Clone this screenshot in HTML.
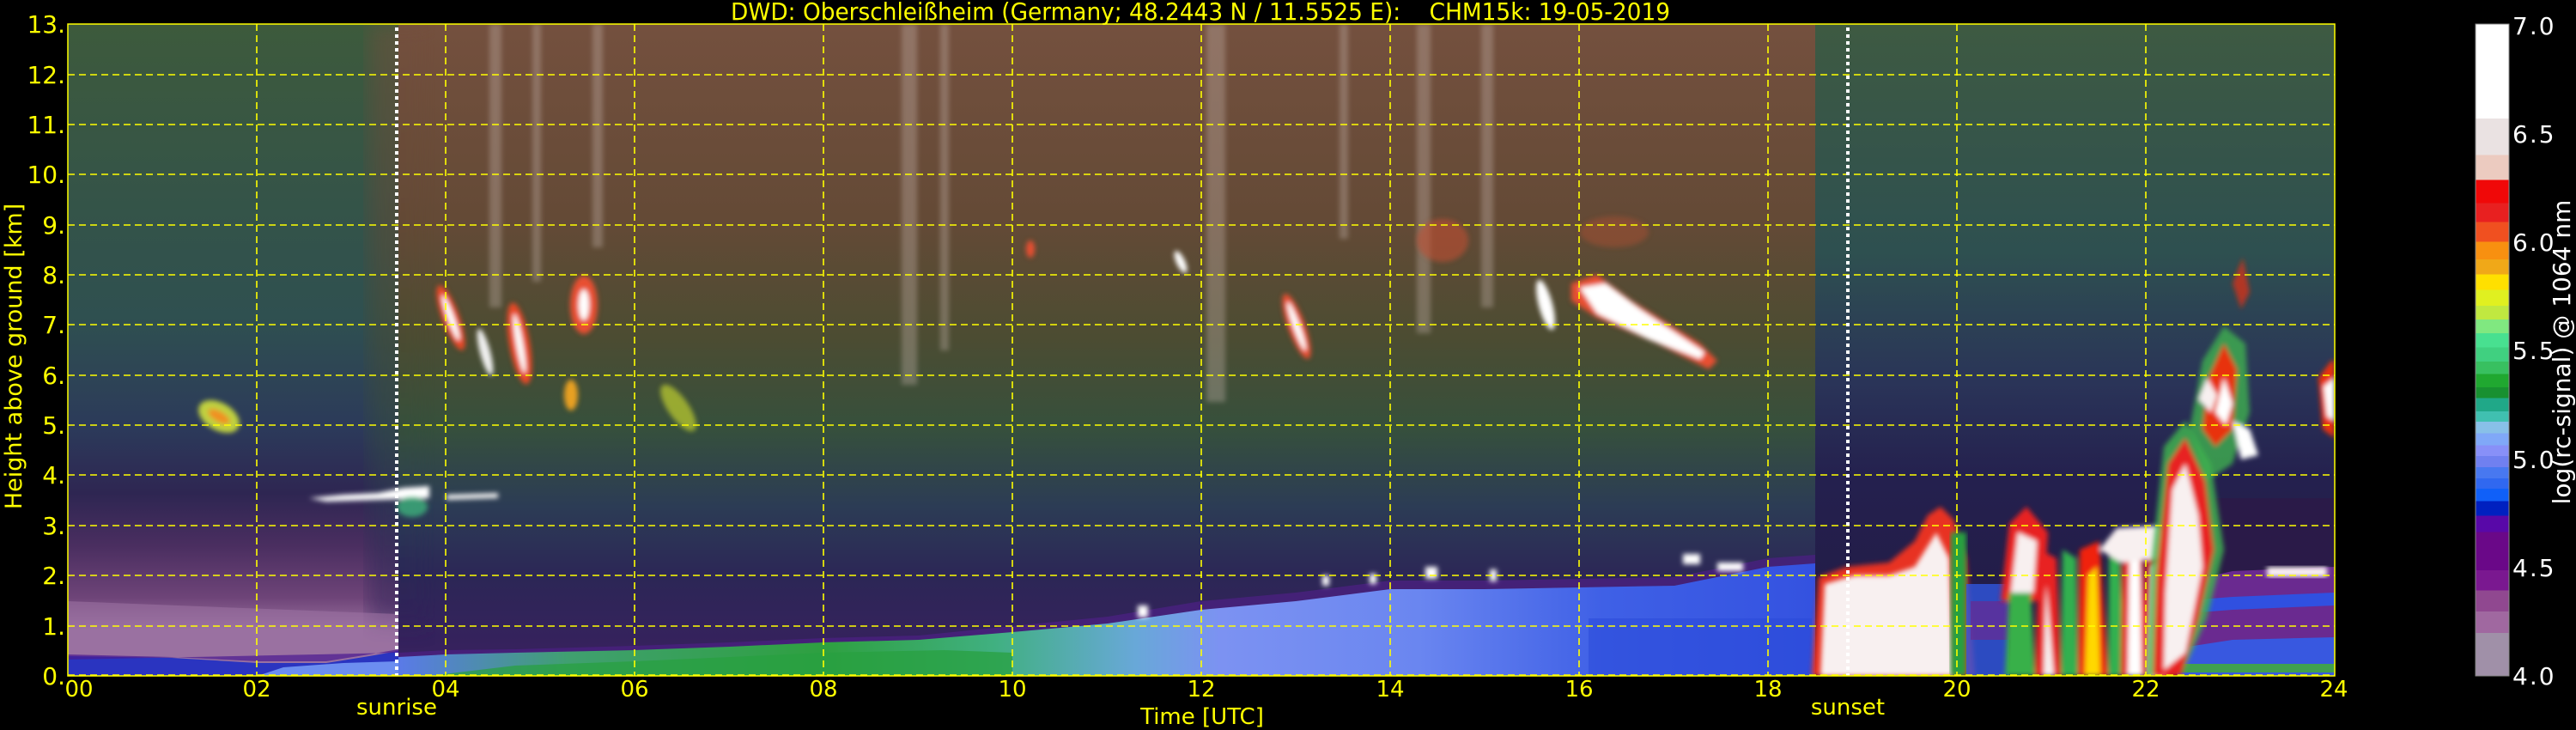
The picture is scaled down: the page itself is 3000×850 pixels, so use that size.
<!DOCTYPE html>
<html><head><meta charset="utf-8"><style>
html,body{margin:0;padding:0;background:#000;}
svg{display:block}
text{font-family:"DejaVu Sans","Liberation Sans",sans-serif;}
</style></head><body>
<svg width="3000" height="850" viewBox="0 0 3000 850" xmlns="http://www.w3.org/2000/svg">
<defs>
<linearGradient id="gL" x1="0" y1="28" x2="0" y2="787" gradientUnits="userSpaceOnUse">
<stop offset="0" stop-color="#3d5a3c"/><stop offset="0.45" stop-color="#2f5050"/>
<stop offset="0.62" stop-color="#2c3a5a"/><stop offset="0.72" stop-color="#2e2652"/>
<stop offset="0.80" stop-color="#4a2e60"/><stop offset="0.88" stop-color="#6e4478"/>
<stop offset="0.93" stop-color="#9a72a0"/><stop offset="1" stop-color="#9a72a0"/>
</linearGradient>
<linearGradient id="gM" x1="0" y1="28" x2="0" y2="787" gradientUnits="userSpaceOnUse">
<stop offset="0" stop-color="#74503e"/><stop offset="0.3" stop-color="#644a36"/>
<stop offset="0.48" stop-color="#4c4c32"/><stop offset="0.62" stop-color="#36503c"/>
<stop offset="0.74" stop-color="#2c3c55"/><stop offset="0.85" stop-color="#2c2656"/>
<stop offset="1" stop-color="#3a2060"/>
</linearGradient>
<linearGradient id="gR" x1="0" y1="28" x2="0" y2="787" gradientUnits="userSpaceOnUse">
<stop offset="0" stop-color="#3e5a42"/><stop offset="0.35" stop-color="#2e5050"/>
<stop offset="0.55" stop-color="#2a3458"/><stop offset="0.7" stop-color="#24204e"/>
<stop offset="1" stop-color="#221a44"/>
</linearGradient>
<linearGradient id="gBL" x1="464" y1="0" x2="2114" y2="0" gradientUnits="userSpaceOnUse">
<stop offset="0" stop-color="#5a7ae8"/><stop offset="0.12" stop-color="#40a070"/>
<stop offset="0.3" stop-color="#2ea040"/><stop offset="0.42" stop-color="#40b080"/>
<stop offset="0.52" stop-color="#68a8d8"/><stop offset="0.58" stop-color="#7c92f2"/>
<stop offset="0.72" stop-color="#6a86f0"/><stop offset="0.85" stop-color="#3f60e6"/>
<stop offset="1" stop-color="#3452e0"/>
</linearGradient>
<linearGradient id="cb" x1="0" y1="0" x2="0" y2="1">
<stop offset="0" stop-color="#fff"/><stop offset="0.145" stop-color="#fff"/>
<stop offset="0.145" stop-color="#eae2e2"/><stop offset="0.201" stop-color="#eae2e2"/>
<stop offset="0.201" stop-color="#eccbc0"/><stop offset="0.239" stop-color="#eccbc0"/>
<stop offset="0.239" stop-color="#f00808"/><stop offset="0.275" stop-color="#f00808"/>
<stop offset="0.275" stop-color="#e82020"/><stop offset="0.304" stop-color="#e82020"/>
<stop offset="0.304" stop-color="#f05020"/><stop offset="0.334" stop-color="#f05020"/>
<stop offset="0.334" stop-color="#f89010"/><stop offset="0.361" stop-color="#f89010"/>
<stop offset="0.361" stop-color="#f0a818"/><stop offset="0.384" stop-color="#f0a818"/>
<stop offset="0.384" stop-color="#ffe000"/><stop offset="0.408" stop-color="#ffe000"/>
<stop offset="0.408" stop-color="#e0f020"/><stop offset="0.432" stop-color="#e0f020"/>
<stop offset="0.432" stop-color="#c0e840"/><stop offset="0.453" stop-color="#c0e840"/>
<stop offset="0.453" stop-color="#80e880"/><stop offset="0.474" stop-color="#80e880"/>
<stop offset="0.474" stop-color="#48e090"/><stop offset="0.496" stop-color="#48e090"/>
<stop offset="0.496" stop-color="#40d080"/><stop offset="0.518" stop-color="#40d080"/>
<stop offset="0.518" stop-color="#38c060"/><stop offset="0.537" stop-color="#38c060"/>
<stop offset="0.537" stop-color="#20a830"/><stop offset="0.557" stop-color="#20a830"/>
<stop offset="0.557" stop-color="#189030"/><stop offset="0.574" stop-color="#189030"/>
<stop offset="0.574" stop-color="#20a888"/><stop offset="0.594" stop-color="#20a888"/>
<stop offset="0.594" stop-color="#40c0b0"/><stop offset="0.61" stop-color="#40c0b0"/>
<stop offset="0.61" stop-color="#88c0e8"/><stop offset="0.628" stop-color="#88c0e8"/>
<stop offset="0.628" stop-color="#80a8f8"/><stop offset="0.646" stop-color="#80a8f8"/>
<stop offset="0.646" stop-color="#8890f8"/><stop offset="0.663" stop-color="#8890f8"/>
<stop offset="0.663" stop-color="#7080f0"/><stop offset="0.68" stop-color="#7080f0"/>
<stop offset="0.68" stop-color="#4878f0"/><stop offset="0.697" stop-color="#4878f0"/>
<stop offset="0.697" stop-color="#3068f0"/><stop offset="0.713" stop-color="#3068f0"/>
<stop offset="0.713" stop-color="#1060f8"/><stop offset="0.732" stop-color="#1060f8"/>
<stop offset="0.732" stop-color="#0020c0"/><stop offset="0.754" stop-color="#0020c0"/>
<stop offset="0.754" stop-color="#5808a8"/><stop offset="0.779" stop-color="#5808a8"/>
<stop offset="0.779" stop-color="#6a0888"/><stop offset="0.838" stop-color="#6a0888"/>
<stop offset="0.838" stop-color="#7a1890"/><stop offset="0.869" stop-color="#7a1890"/>
<stop offset="0.869" stop-color="#904890"/><stop offset="0.901" stop-color="#904890"/>
<stop offset="0.901" stop-color="#a068a0"/><stop offset="0.934" stop-color="#a068a0"/>
<stop offset="0.934" stop-color="#a090a8"/><stop offset="1" stop-color="#a090a8"/>
</linearGradient>
<filter id="b3"><feGaussianBlur stdDeviation="3"/></filter>
<filter id="b6"><feGaussianBlur stdDeviation="6"/></filter>
<filter id="b12"><feGaussianBlur stdDeviation="12"/></filter>
<clipPath id="plot"><rect x="79" y="28" width="2640" height="759"/></clipPath>
</defs>

<g clip-path="url(#plot)">
<rect x="79" y="28" width="385" height="759" fill="url(#gL)"/>
<rect x="464" y="28" width="1650" height="759" fill="url(#gM)"/>
<rect x="2114" y="28" width="605" height="759" fill="url(#gR)"/>
<rect x="430" y="28" width="70" height="700" fill="url(#gM)" opacity="0.5" filter="url(#b12)"/>
<g fill="#c8b8b0" opacity="0.35" filter="url(#b3)">
<rect x="570" y="28" width="14" height="330"/><rect x="620" y="28" width="10" height="300"/>
<rect x="690" y="28" width="12" height="260"/><rect x="1050" y="28" width="18" height="420"/>
<rect x="1095" y="28" width="10" height="380"/><rect x="1405" y="28" width="22" height="440"/>
<rect x="1650" y="28" width="16" height="360"/><rect x="1725" y="28" width="14" height="330"/>
<rect x="1560" y="28" width="10" height="250"/>
</g>
<polygon points="79,700 464,715 464,787 79,787" fill="#9b72a2" opacity="0.6"/>
<polygon points="79,764 200,766 300,772 380,772 430,764 464,758 464,787 79,787" fill="#2a34c0"/>
<polygon points="79,762 200,765 300,770 380,770 430,762 464,756 464,760 79,768" fill="#4a1a90" opacity="0.7"/>
<polygon points="300,787 330,777 400,772 464,770 464,787" fill="#6c8ef0"/>
<polygon points="464,760 520,757 600,756 739,752 850,748 959,743 1070,740 1179,729 1290,718 1399,700 1509,690 1619,676 1729,676 1839,674 1950,672 2059,650 2114,646 2114,787 464,787" fill="#4a2080" opacity="0.8"/>
<polygon points="464,765 520,762 600,760 739,757 850,753 959,748 1070,745 1179,736 1290,726 1399,710 1509,700 1619,686 1729,686 1839,684 1950,682 2059,660 2114,656 2114,787 464,787" fill="url(#gBL)"/>
<polygon points="500,787 600,775 739,770 850,765 959,760 1100,757 1179,760 1179,787" fill="#28a040" opacity="0.75"/>
<rect x="1850" y="720" width="260" height="67" fill="#2848d8" opacity="0.5"/>
<!-- sunset cloud -->
<polygon points="2110,787 2118,672 2150,660 2200,655 2230,630 2245,600 2260,590 2275,605 2290,650 2300,787" fill="#e83020" filter="url(#b3)"/>
<polygon points="2120,787 2125,680 2160,670 2200,670 2230,660 2255,620 2270,650 2275,787" fill="#f8f0f0" filter="url(#b3)"/>
<rect x="2272" y="620" width="18" height="167" fill="#28a040" filter="url(#b3)"/>
<rect x="2290" y="680" width="50" height="107" fill="#3058e0" opacity="0.8"/>
<rect x="2295" y="700" width="50" height="45" fill="#6a2a90" opacity="0.7"/>
<g filter="url(#b3)">
<polygon points="2330,700 2340,610 2360,590 2385,620 2380,700" fill="#e82020"/>
<polygon points="2342,690 2350,620 2372,630 2368,690" fill="#f8f0f0"/>
<polygon points="2335,787 2340,690 2365,690 2370,787" fill="#38b048"/>
<polygon points="2370,787 2375,640 2395,650 2400,787" fill="#e82020"/>
<polygon points="2380,787 2383,680 2392,787" fill="#f8f0f0"/>
<polygon points="2400,787 2402,640 2418,650 2420,787" fill="#30b050"/>
<polygon points="2420,787 2422,640 2445,630 2455,787" fill="#f02010"/>
<polygon points="2428,787 2432,670 2442,660 2446,787" fill="#ffd800"/>
<polygon points="2455,787 2456,640 2468,635 2475,787" fill="#30b050"/>
<polygon points="2470,787 2472,630 2495,620 2500,787" fill="#e82020"/>
<polygon points="2478,787 2480,650 2492,645 2494,787" fill="#fff"/>
<polygon points="2495,787 2500,640 2515,630 2528,660 2530,787" fill="#e82020"/>
<polygon points="2502,787 2506,660 2518,655 2522,787" fill="#fff"/>
<polygon points="2445,640 2465,615 2515,612 2530,630 2515,650 2470,655" fill="#f8f0f0"/>
</g>
<rect x="2540" y="580" width="179" height="207" fill="#2a1a48"/>
<polygon points="2535,680 2600,665 2719,660 2719,787 2535,787" fill="#6a2a90"/>
<polygon points="2535,700 2600,695 2719,690 2719,705 2600,710 2535,715" fill="#3050e0"/>
<polygon points="2535,755 2600,745 2719,742 2719,787 2535,787" fill="#3858e0"/>
<rect x="2535" y="773" width="184" height="10" fill="#40a050"/>
<rect x="2640" y="660" width="70" height="12" fill="#f8f0f0" filter="url(#b3)"/>
<!-- right clouds -->
<g filter="url(#b3)">
<polygon points="2500,787 2505,660 2520,520 2545,490 2575,540 2590,640 2570,720 2540,787" fill="#40b050" opacity="0.85"/>
<polygon points="2508,787 2512,670 2525,540 2545,510 2568,560 2578,640 2560,720 2540,787" fill="#e82020"/>
<polygon points="2520,780 2522,690 2530,570 2545,540 2560,600 2565,660 2545,760" fill="#f8f0f0"/>
<polygon points="2550,500 2565,420 2590,380 2615,400 2620,480 2600,540 2570,560" fill="#40b050" opacity="0.8"/>
<polygon points="2565,500 2572,440 2590,400 2605,430 2600,500 2580,520" fill="#e83010"/>
<polygon points="2580,480 2590,440 2600,470 2592,495" fill="#fff"/>
<polygon points="2600,490 2620,500 2630,530 2610,535" fill="#fff"/>
<polygon points="2560,465 2570,440 2582,460 2575,480" fill="#f8f0f0"/>
<polygon points="2700,440 2715,420 2719,420 2719,510 2705,500" fill="#e83010"/>
<polygon points="2706,450 2719,440 2719,490 2710,485" fill="#fff"/>
<polygon points="2600,330 2612,300 2620,340 2610,360" fill="#e83010" opacity="0.7"/>
</g>
<!-- left features -->
<g filter="url(#b3)">
<ellipse cx="255" cy="485" rx="26" ry="16" transform="rotate(30 255 485)" fill="#c0d040"/>
<ellipse cx="255" cy="485" rx="14" ry="6" transform="rotate(30 255 485)" fill="#f09020"/>
<polygon points="360,580 400,576 440,574 470,568 500,566 500,580 440,582 380,584" fill="#fff"/>
<polygon points="520,576 580,574 580,580 520,582" fill="#f0f0f0"/>
<ellipse cx="480" cy="590" rx="18" ry="12" fill="#40c080" opacity="0.7"/>
</g>
<!-- cirrus -->
<g filter="url(#b3)">
<ellipse cx="525" cy="370" rx="10" ry="40" transform="rotate(-20 525 370)" fill="#e84828"/>
<ellipse cx="525" cy="370" rx="4" ry="28" transform="rotate(-20 525 370)" fill="#fff"/>
<ellipse cx="565" cy="410" rx="6" ry="28" transform="rotate(-15 565 410)" fill="#f0f0f0"/>
<ellipse cx="605" cy="400" rx="12" ry="48" transform="rotate(-10 605 400)" fill="#e84828"/>
<ellipse cx="605" cy="400" rx="4" ry="35" transform="rotate(-10 605 400)" fill="#fff"/>
<ellipse cx="680" cy="355" rx="16" ry="34" fill="#e85030"/>
<ellipse cx="680" cy="355" rx="6" ry="18" fill="#fff"/>
<ellipse cx="665" cy="460" rx="8" ry="18" fill="#e8a020"/>
<ellipse cx="790" cy="475" rx="12" ry="32" transform="rotate(-35 790 475)" fill="#b0c030" opacity="0.8"/>
<ellipse cx="1375" cy="305" rx="5" ry="14" transform="rotate(-25 1375 305)" fill="#fff"/>
<ellipse cx="1510" cy="380" rx="10" ry="40" transform="rotate(-20 1510 380)" fill="#e85030"/>
<ellipse cx="1510" cy="380" rx="4" ry="30" transform="rotate(-20 1510 380)" fill="#fff"/>
<ellipse cx="1680" cy="280" rx="30" ry="25" fill="#c05030" opacity="0.6"/>
<ellipse cx="1800" cy="355" rx="8" ry="30" transform="rotate(-15 1800 355)" fill="#fff"/>
<polygon points="1830,330 1860,320 1900,350 1980,400 2000,420 1990,430 1930,400 1860,370 1830,350" fill="#e85030"/>
<polygon points="1840,335 1870,330 1910,360 1985,410 1980,418 1920,395 1860,365" fill="#fff"/>
<ellipse cx="1200" cy="290" rx="5" ry="10" fill="#e85030"/>
<ellipse cx="1880" cy="270" rx="40" ry="18" fill="#a85030" opacity="0.5"/>
</g>
<g fill="#fff" filter="url(#b3)">
<rect x="1325" y="705" width="12" height="14"/><rect x="1540" y="670" width="8" height="12"/>
<rect x="1595" y="668" width="8" height="12"/><rect x="1660" y="660" width="14" height="14"/>
<rect x="1735" y="663" width="8" height="14"/><rect x="1960" y="645" width="20" height="12"/>
<rect x="2000" y="655" width="30" height="10"/>
</g>
<g stroke="#ffff00" stroke-width="1.6" stroke-dasharray="8,5" fill="none">
<line x1="79" y1="87" x2="2719" y2="87"/><line x1="79" y1="145" x2="2719" y2="145"/>
<line x1="79" y1="203" x2="2719" y2="203"/><line x1="79" y1="262" x2="2719" y2="262"/>
<line x1="79" y1="320" x2="2719" y2="320"/><line x1="79" y1="378" x2="2719" y2="378"/>
<line x1="79" y1="437" x2="2719" y2="437"/><line x1="79" y1="495" x2="2719" y2="495"/>
<line x1="79" y1="553" x2="2719" y2="553"/><line x1="79" y1="612" x2="2719" y2="612"/>
<line x1="79" y1="670" x2="2719" y2="670"/><line x1="79" y1="729" x2="2719" y2="729"/>
<line x1="79" y1="786" x2="2719" y2="786"/>
<line x1="299" y1="28" x2="299" y2="787"/><line x1="519" y1="28" x2="519" y2="787"/>
<line x1="739" y1="28" x2="739" y2="787"/><line x1="959" y1="28" x2="959" y2="787"/>
<line x1="1179" y1="28" x2="1179" y2="787"/><line x1="1399" y1="28" x2="1399" y2="787"/>
<line x1="1619" y1="28" x2="1619" y2="787"/><line x1="1839" y1="28" x2="1839" y2="787"/>
<line x1="2059" y1="28" x2="2059" y2="787"/><line x1="2279" y1="28" x2="2279" y2="787"/>
<line x1="2499" y1="28" x2="2499" y2="787"/>
</g>
<line x1="462" y1="32" x2="462" y2="787" stroke="#fff" stroke-width="4" stroke-dasharray="4,4"/>
<line x1="2152" y1="32" x2="2152" y2="787" stroke="#fff" stroke-width="4" stroke-dasharray="4,4"/>
</g>
<rect x="79" y="28" width="2640" height="759" fill="none" stroke="#ffff00" stroke-width="1.5"/>

<text x="1398" y="23" fill="#ffff00" font-size="28" text-anchor="middle" textLength="1094" lengthAdjust="spacingAndGlyphs" xml:space="preserve">DWD: Oberschleißheim (Germany; 48.2443 N / 11.5525 E):    CHM15k: 19-05-2019</text>

<g fill="#ffff00" font-size="28" text-anchor="end">
<text x="76" y="797">0.</text><text x="76" y="739">1.</text><text x="76" y="680">2.</text>
<text x="76" y="622">3.</text><text x="76" y="563">4.</text><text x="76" y="505">5.</text>
<text x="76" y="447">6.</text><text x="76" y="388">7.</text><text x="76" y="330">8.</text>
<text x="76" y="272">9.</text><text x="76" y="213">10.</text><text x="76" y="155">11.</text>
<text x="76" y="97">12.</text><text x="76" y="38">13.</text>
</g>
<g fill="#ffff00" font-size="26" text-anchor="middle">
<text x="92" y="811">00</text><text x="299" y="811">02</text><text x="519" y="811">04</text>
<text x="739" y="811">06</text><text x="959" y="811">08</text><text x="1179" y="811">10</text>
<text x="1399" y="811">12</text><text x="1619" y="811">14</text><text x="1839" y="811">16</text>
<text x="2059" y="811">18</text><text x="2279" y="811">20</text><text x="2499" y="811">22</text>
<text x="2718" y="811">24</text>
<text x="462" y="832">sunrise</text><text x="2152" y="832">sunset</text>
<text x="1400" y="843">Time [UTC]</text>
</g>
<text transform="translate(25 415) rotate(-90)" fill="#ffff00" font-size="27" text-anchor="middle">Height above ground [km]</text>

<rect x="2883" y="28" width="39" height="759" fill="url(#cb)" stroke="#888" stroke-width="1"/>
<g fill="#fff" font-size="28" letter-spacing="2">
<text x="2926" y="40">7.0</text><text x="2926" y="166">6.5</text><text x="2926" y="292">6.0</text>
<text x="2926" y="418">5.5</text><text x="2926" y="545">5.0</text><text x="2926" y="671">4.5</text>
<text x="2926" y="797">4.0</text>
</g>
<text transform="translate(2993 410) rotate(-90)" fill="#fff" font-size="28" text-anchor="middle">log(rc-signal) @ 1064 nm</text>
</svg>
</body></html>
